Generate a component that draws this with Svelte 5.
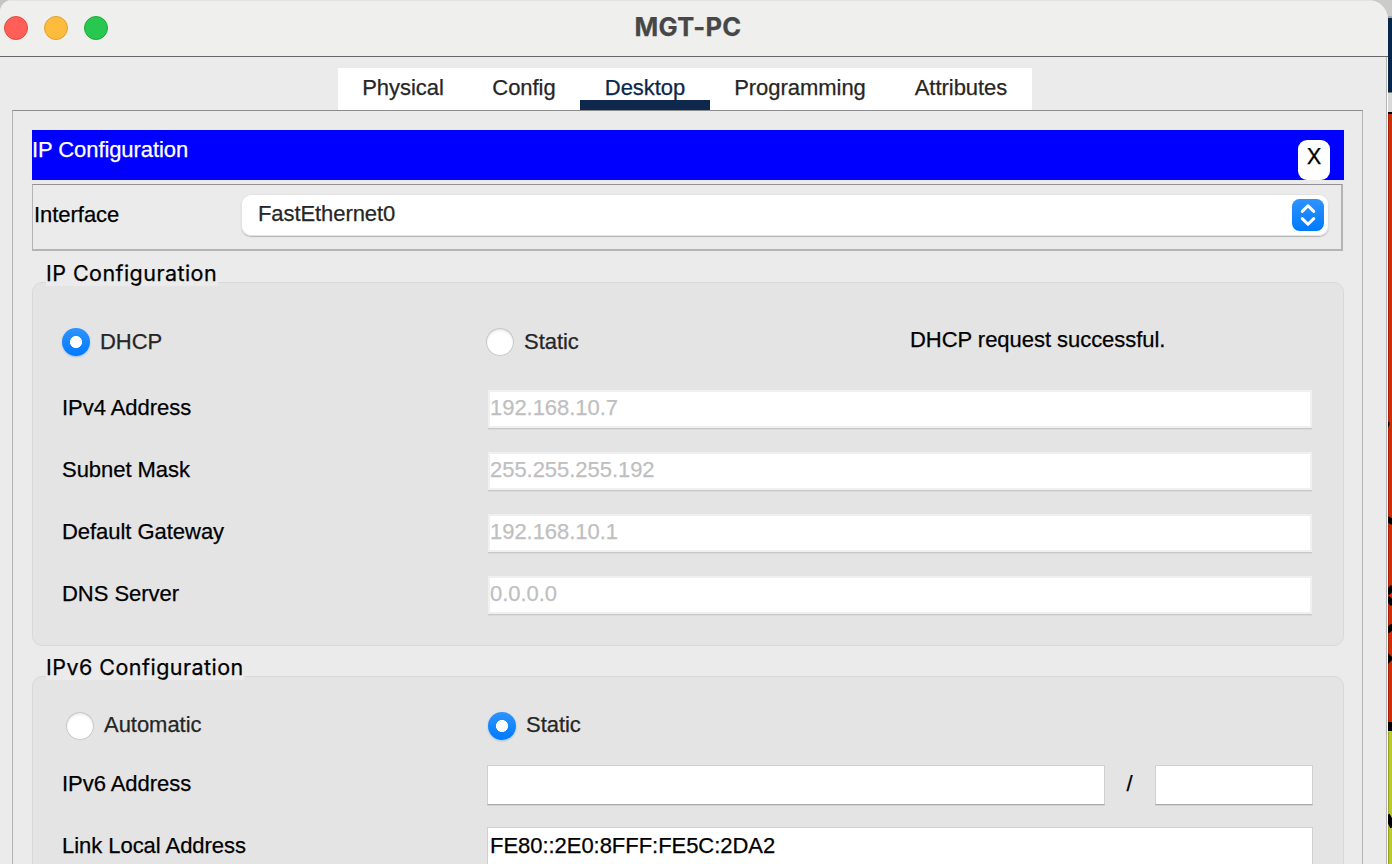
<script>
  const lights = ['red', 'amber', 'green'];
  const tabs = [
    { name: 'Physical', width: 130 },
    { name: 'Config', width: 112 },
    { name: 'Desktop', width: 130 },
    { name: 'Programming', width: 180 },
    { name: 'Attributes', width: 142 }
  ];
  const active = 'Desktop';
  const ipv4 = [
    { label: 'IPv4 Address', value: '192.168.10.7' },
    { label: 'Subnet Mask', value: '255.255.255.192' },
    { label: 'Default Gateway', value: '192.168.10.1' },
    { label: 'DNS Server', value: '0.0.0.0' }
  ];
</script>

<div class="screen">
  <div class="window">
    <header class="titlebar">
      <div class="lights">
        {#each lights as light}
          <span class="light {light}"></span>
        {/each}
      </div>
      <h1>MGT-PC</h1>
    </header>

    <div class="body">
      <nav class="tabs">
        {#each tabs as tab}
          <div class="tab" class:active={tab.name === active} style="width: {tab.width}px">{tab.name}</div>
        {/each}
      </nav>

      <main class="panel">
        <div class="banner">
          <span>IP Configuration</span>
          <div class="close">X</div>
        </div>

        <div class="interface">
          <span class="interface-label">Interface</span>
          <div class="select">
            <span>FastEthernet0</span>
            <svg class="stepper" viewBox="0 0 32 32" width="32" height="32">
              <defs>
                <linearGradient id="stepper-fill" x1="0" y1="0" x2="0" y2="1">
                  <stop offset="0" stop-color="#2e93ff" />
                  <stop offset="1" stop-color="#007aff" />
                </linearGradient>
              </defs>
              <rect width="32" height="32" rx="7.5" fill="url(#stepper-fill)" />
              <path
                d="M10.300 12.400 16 6.800l5.700 5.600M10.300 19.600l5.700 5.600 5.700-5.600"
                fill="none"
                stroke="#fff"
                stroke-width="3"
                stroke-linecap="round"
                stroke-linejoin="round"
              />
            </svg>
          </div>
        </div>

        <div class="legend"><span class="v4">IP Configuration</span></div>
        <section class="group first">
          <div class="modes">
            <div class="option"><i class="radio on"></i><span>DHCP</span></div>
            <div class="option static"><i class="radio"></i><span>Static</span></div>
            <div class="status">DHCP request successful.</div>
          </div>
          {#each ipv4 as row}
            <div class="row">
              <span class="label">{row.label}</span>
              <div class="field disabled">{row.value}</div>
            </div>
          {/each}
        </section>

        <div class="legend second"><span class="v6">IPv6 Configuration</span></div>
        <section class="group last">
          <div class="modes six">
            <div class="option auto"><i class="radio"></i><span>Automatic</span></div>
            <div class="option"><i class="radio on"></i><span>Static</span></div>
          </div>
          <div class="row wide">
            <span class="label">IPv6 Address</span>
            <div class="prefix">
              <div class="field address"></div>
              <span class="slash">/</span>
              <div class="field length"></div>
            </div>
          </div>
          <div class="row wide">
            <span class="label">Link Local Address</span>
            <div class="field">FE80::2E0:8FFF:FE5C:2DA2</div>
          </div>
        </section>
      </main>
    </div>
  </div>

  <svg class="canvas" width="24" height="864" viewBox="0 0 24 864">
    <rect width="24" height="16" fill="#cbcbcb" />
    <rect y="16" width="24" height="2" fill="#aaa" />
    <rect y="18" width="24" height="74" fill="#06264c" />
    <rect y="92" width="24" height="20" fill="#d8d8d8" />
    <rect y="92" width="24" height="1" fill="#777" />
    <rect y="112" width="24" height="2" fill="#000" />
    <rect y="114" width="24" height="608" fill="#d12d06" />
    <rect y="722" width="24" height="10" fill="#000" />
    <rect y="731" width="24" height="133" fill="#bbc92c" />
    <rect x="20" y="114" width="1" height="608" fill="#a92405" />
    <rect x="20" y="732" width="1" height="132" fill="#96a323" />
    <g stroke="#000" stroke-width="6" fill="none">
      <path d="M19 519l6 3M19 593l6-6M19 598l6 6M19 631l6-5M19 815l6 12" />
    </g>
    <path d="M20 653l4 4v3l-4 4zM20 422h1.500v3l-1.500 3z" />
  </svg>
</div>

<style>
  :global(body) {
    margin: 0;
    overflow: hidden;
  }
  .screen {
    position: relative;
    width: 1392px;
    height: 864px;
    overflow: hidden;
    background: #c4c4c4;
    font: 22px/26px 'Liberation Sans', Arial, sans-serif;
    letter-spacing: -0.04px;
    -webkit-text-stroke: 0.25px currentColor;
    color: #000;
    white-space: nowrap;
  }
  .screen * {
    box-sizing: border-box;
  }
  .canvas {
    position: absolute;
    right: 0;
    top: 0;
    z-index: 0;
  }
  .window {
    position: relative;
    z-index: 1;
    width: 1388px;
    height: 864px;
    overflow: hidden;
    border-radius: 12px 20px 0 0;
    background: #ebebeb;
    display: flex;
    flex-direction: column;
  }
  .titlebar {
    height: 57px;
    flex: none;
    display: grid;
    grid-template-columns: 124px 1fr 136px;
    background: #efefed;
    border-bottom: 1px solid #666;
    border-top: 1px solid #e2e2e2;
  }
  .lights {
    display: flex;
    gap: 16px;
    padding: 15px 0 0 4px;
  }
  .light {
    width: 24px;
    height: 24px;
    border-radius: 50%;
    border: 1px solid;
  }
  .red {
    background: #ff5f57;
    border-color: #e24b41;
  }
  .amber {
    background: #febc3e;
    border-color: #dfa032;
  }
  .green {
    background: #28c850;
    border-color: #1eaa35;
  }
  h1 {
    margin: 0;
    padding-top: 10px;
    text-align: center;
    font: 700 25.5px/32px Inter, sans-serif;
    letter-spacing: 0.3px;
    color: #474747;
  }
  .body {
    flex: 1;
    display: flex;
    flex-direction: column;
    padding: 11px 24px 0 12px;
    border-right: 1px solid #fff;
    box-shadow: inset -1px 0 #b4b4b4;
  }
  .tabs {
    display: flex;
    align-self: flex-start;
    margin-left: 326px;
    height: 42px;
    background: #fff;
  }
  .tab {
    text-align: center;
    line-height: 39px;
    color: #262626;
  }
  .tab.active {
    color: #0b264d;
    background: linear-gradient(#0d274d, #0d274d) 0 100% / 100% 10px no-repeat;
  }
  .panel {
    flex: 1;
    min-height: 0;
    width: 1351px;
    padding: 19px 18px 0 19px;
    border: solid #b4b4b4;
    border-width: 1px 1px 0;
    border-top-color: #8c8c8c;
    display: flex;
    flex-direction: column;
  }
  .banner {
    flex: none;
    height: 50px;
    display: flex;
    justify-content: space-between;
    padding: 0 14px 0 0;
    background: #00f;
    color: #fff;
    line-height: 40px;
    letter-spacing: -0.08px;
  }
  .close {
    margin-top: 10px;
    width: 32px;
    height: 40px;
    border-radius: 9px;
    background: #fff;
    color: #000;
    text-align: center;
    font: 400 21.5px/33px Inter, sans-serif;
  }
  .interface {
    flex: none;
    margin: 4px 1px 0 0;
    height: 67px;
    display: flex;
    padding: 9px 12px 0 1px;
    border: 1px solid #b4b4b4;
    border-width: 1px 2px 2px 1px;
    border-top-color: #919191;
  }
  .interface-label {
    width: 207px;
    line-height: 42px;
  }
  .select {
    flex: 1;
    height: 42px;
    display: flex;
    justify-content: space-between;
    padding: 5px 5px 0 17px;
    background: #fff;
    border-radius: 10px;
    box-shadow: inset 0 0 0 1px #e2e2e2, 0 1px 1px #b3b3b3;
    color: #262626;
    line-height: 30px;
    letter-spacing: -0.08px;
  }
  .legend {
    flex: none;
    height: 31px;
    padding: 7px 0 0 14px;
  }
  .legend span {
    position: relative;
    z-index: 1;
    display: block;
    height: 28px;
    background: #ebebeb;
    font: 400 21.5px/30px Inter, sans-serif;
  }
  .v4 {
    width: 172px;
    letter-spacing: 0.45px;
  }
  .v6 {
    width: 198px;
    letter-spacing: 0.47px;
  }
  .group {
    flex: none;
    padding: 0 31px 0 29px;
    background: #e4e4e4;
    border: 1px solid #d9d9d9;
    border-radius: 10px;
  }
  .first {
    height: 364px;
  }
  .last {
    height: 230px;
  }
  .second {
    height: 30px;
    padding-top: 6px;
  }
  .modes {
    height: 107px;
    display: grid;
    grid-template-columns: 424px 424px 1fr;
    align-items: start;
    padding-top: 45px;
  }
  .modes.six {
    height: 88px;
    padding-top: 35px;
    grid-template-columns: 426px 1fr;
  }
  .option {
    display: flex;
    gap: 10px;
    line-height: 28px;
    color: #262626;
  }
  .six .option {
    line-height: 26px;
  }
  .auto {
    padding-left: 4px;
  }
  .radio {
    width: 28px;
    height: 28px;
    border-radius: 50%;
    background: #fff;
    box-shadow: inset 0 0 0 1px #c8c8c8, inset 0 2px 3px #ddd;
  }
  .radio.on {
    background: radial-gradient(circle, #fff 5.700px, transparent 6.300px), linear-gradient(#2e93ff, #007aff);
    box-shadow: 0 1px 2px #9bbde5;
  }
  .status {
    line-height: 24px;
  }
  .row {
    height: 62px;
    display: grid;
    grid-template-columns: 426px 1fr;
    align-items: start;
  }
  .label {
    line-height: 36px;
  }
  .field {
    height: 40px;
    padding-left: 2px;
    line-height: 35px;
    background: #fff;
    border: 1px solid #d0d0d0;
    border-bottom-color: #aaa;
    box-shadow: 0 1px #d2d2d2;
  }
  .disabled {
    padding-left: 0;
    line-height: 32px;
    color: #bfbfbf;
    border: 2px solid #f0f0f0;
    border-bottom-color: #f0f0f0;
    height: 38px;
    box-shadow: 0 1px #c8c8c8, 0 2px #dadada;
  }
  .wide {
    grid-template-columns: 425px 826px;
  }
  .wide .label {
    line-height: 38px;
  }
  .prefix {
    display: flex;
  }
  .address {
    width: 618px;
  }
  .slash {
    width: 50px;
    padding-right: 1px;
    text-align: center;
    line-height: 38px;
  }
  .length {
    width: 158px;
  }
</style>
